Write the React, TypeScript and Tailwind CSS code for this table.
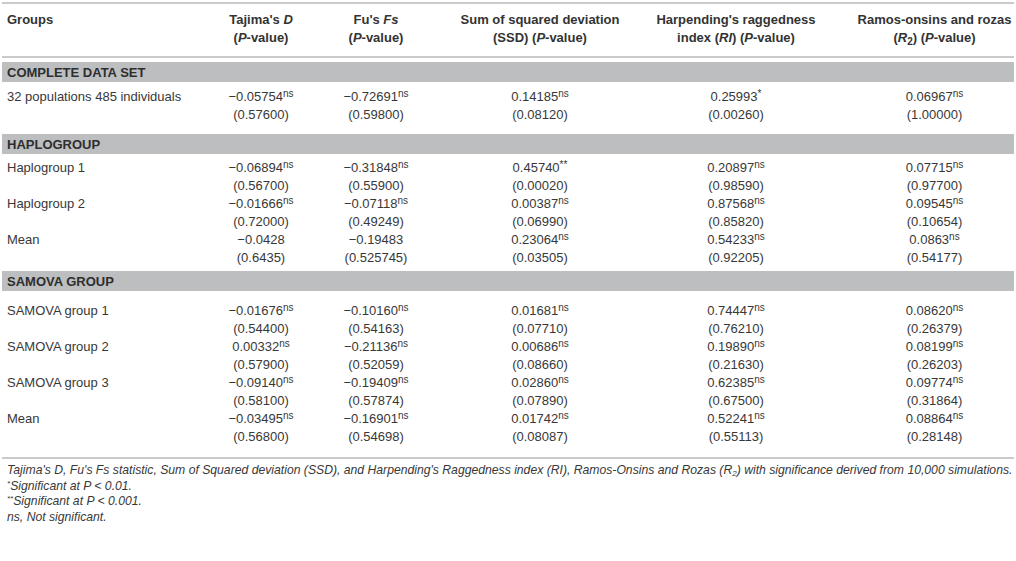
import React from "react";

type Row = {
  group: string;
  cells: [string, string, string][]; // value, mark, p-value
};

type Section = {
  title: string;
  pad: string; // spacing above/below the rows of this block
  rows: Row[];
};

const sections: Section[] = [
  {
    title: "COMPLETE DATA SET",
    pad: "pt-[6px] pb-[6px]",
    rows: [
      {
        group: "32 populations 485 individuals",
        cells: [
          ["−0.05754", "ns", "(0.57600)"],
          ["−0.72691", "ns", "(0.59800)"],
          ["0.14185", "ns", "(0.08120)"],
          ["0.25993", "*", "(0.00260)"],
          ["0.06967", "ns", "(1.00000)"],
        ],
      },
    ],
  },
  {
    title: "HAPLOGROUP",
    pad: "pt-[5px] pb-0",
    rows: [
      {
        group: "Haplogroup 1",
        cells: [
          ["−0.06894", "ns", "(0.56700)"],
          ["−0.31848", "ns", "(0.55900)"],
          ["0.45740", "**", "(0.00020)"],
          ["0.20897", "ns", "(0.98590)"],
          ["0.07715", "ns", "(0.97700)"],
        ],
      },
      {
        group: "Haplogroup 2",
        cells: [
          ["−0.01666", "ns", "(0.72000)"],
          ["−0.07118", "ns", "(0.49249)"],
          ["0.00387", "ns", "(0.06990)"],
          ["0.87568", "ns", "(0.85820)"],
          ["0.09545", "ns", "(0.10654)"],
        ],
      },
      {
        group: "Mean",
        cells: [
          ["−0.0428", "", "(0.6435)"],
          ["−0.19483", "", "(0.525745)"],
          ["0.23064", "ns", "(0.03505)"],
          ["0.54233", "ns", "(0.92205)"],
          ["0.0863", "ns", "(0.54177)"],
        ],
      },
    ],
  },
  {
    title: "SAMOVA GROUP",
    pad: "pt-[11px] pb-[11px]",
    rows: [
      {
        group: "SAMOVA group 1",
        cells: [
          ["−0.01676", "ns", "(0.54400)"],
          ["−0.10160", "ns", "(0.54163)"],
          ["0.01681", "ns", "(0.07710)"],
          ["0.74447", "ns", "(0.76210)"],
          ["0.08620", "ns", "(0.26379)"],
        ],
      },
      {
        group: "SAMOVA group 2",
        cells: [
          ["0.00332", "ns", "(0.57900)"],
          ["−0.21136", "ns", "(0.52059)"],
          ["0.00686", "ns", "(0.08660)"],
          ["0.19890", "ns", "(0.21630)"],
          ["0.08199", "ns", "(0.26203)"],
        ],
      },
      {
        group: "SAMOVA group 3",
        cells: [
          ["−0.09140", "ns", "(0.58100)"],
          ["−0.19409", "ns", "(0.57874)"],
          ["0.02860", "ns", "(0.07890)"],
          ["0.62385", "ns", "(0.67500)"],
          ["0.09774", "ns", "(0.31864)"],
        ],
      },
      {
        group: "Mean",
        cells: [
          ["−0.03495", "ns", "(0.56800)"],
          ["−0.16901", "ns", "(0.54698)"],
          ["0.01742", "ns", "(0.08087)"],
          ["0.52241", "ns", "(0.55113)"],
          ["0.08864", "ns", "(0.28148)"],
        ],
      },
    ],
  },
];

// column grid shared by header and body rows
const cols = "grid grid-cols-[201px_116px_114px_214px_178px_189px]";
// last column is shifted right a bit so its text centres near x=934
const lastCol = "pl-[30px]";

function PVal() {
  return (
    <>
      (<i>P</i>-value)
    </>
  );
}

function Mark({ children }: { children: React.ReactNode }) {
  return <span className="text-[10px] leading-none align-[4px]">{children}</span>;
}

export default function App() {
  return (
    <div className="w-[1016px] h-[561px] bg-white text-[#383838] font-['Liberation_Sans',Arial,sans-serif]">
      <div className="mx-[2px] pt-[2px]">
        {/* header */}
        <div
          className={`${cols} border-t-2 border-b-2 border-[#cacaca] pt-[7px] pb-[9px] text-[13px] leading-[18px] font-bold text-[#333] whitespace-nowrap`}
        >
          <div className="pl-[5px]">Groups</div>
          <div className="text-center">
            Tajima's <i>D</i>
            <br />
            <PVal />
          </div>
          <div className="text-center">
            Fu's <i>Fs</i>
            <br />
            <PVal />
          </div>
          <div className="text-center">
            Sum of squared deviation
            <br />
            (SSD) <PVal />
          </div>
          <div className="text-center">
            Harpending's raggedness
            <br />
            index (<i>RI</i>) <PVal />
          </div>
          <div className={`text-center ${lastCol}`}>
            Ramos-onsins and rozas
            <br />
            (<i>R</i>
            <span className="text-[10px] leading-none align-[-3px]">2</span>) <PVal />
          </div>
        </div>

        {sections.map((s) => (
          <div key={s.title}>
            <div className="mt-[4px] h-[20px] bg-[#bdbec0] pl-[5px] text-[13px] leading-[21px] font-bold text-[#2e2e2e]">
              {s.title}
            </div>
            <div className={s.pad}>
              {s.rows.map((r, ri) => (
                <div key={r.group + ri} className={`${cols} text-[13px] leading-[18px]`}>
                  <div className="pl-[5px]">{r.group}</div>
                  {r.cells.map((c, ci) => (
                    <div key={ci} className={`text-center ${ci === 4 ? lastCol : ""}`}>
                      <div>
                        {c[0]}
                        {c[1] && <Mark>{c[1]}</Mark>}
                      </div>
                      <div>{c[2]}</div>
                    </div>
                  ))}
                </div>
              ))}
            </div>
          </div>
        ))}

        {/* footnotes */}
        <div className="border-t-2 border-[#cacaca] pt-[4px] pl-[5px] text-[12.2px] leading-[15.5px] italic">
          <div>
            Tajima's D, Fu's Fs statistic, Sum of Squared deviation (SSD), and Harpending's Raggedness index (RI),
            Ramos-Onsins and Rozas (R<span className="text-[8px] leading-none align-[-2px]">2</span>) with
            significance derived from 10,000 simulations.
          </div>
          <div>
            <span className="text-[8px] leading-none align-[4px]">*</span>Significant at P &lt; 0.01.
          </div>
          <div>
            <span className="text-[8px] leading-none align-[4px]">**</span>Significant at P &lt; 0.001.
          </div>
          <div>ns, Not significant.</div>
        </div>
      </div>
    </div>
  );
}
